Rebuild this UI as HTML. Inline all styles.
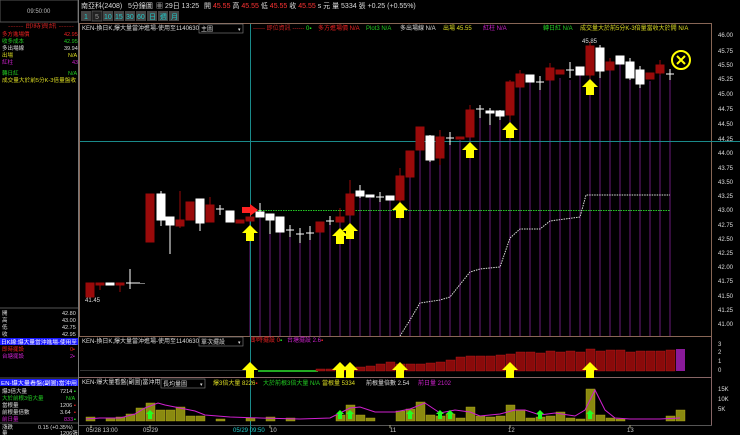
<!DOCTYPE html>
<html><head><meta charset="utf-8">
<style>
html,body{margin:0;padding:0;background:#000;width:740px;height:435px;overflow:hidden}
svg{display:block}
text{font-family:"Liberation Sans","Noto Sans CJK TC",sans-serif}
</style></head><body>
<svg width="740" height="435" viewBox="0 0 740 435" xmlns="http://www.w3.org/2000/svg">
<rect width="740" height="435" fill="#000"/>
<!-- left panel -->
<rect x="0" y="0" width="78" height="22" fill="#000" stroke="#555" stroke-width="1"/>
<text x="27" y="13" font-size="6" fill="#bbb">09:50:00</text>
<line x1="78.5" y1="0" x2="78.5" y2="435" stroke="#777"/>
<text x="8" y="28" font-size="5.5" fill="#c22" textLength="66" lengthAdjust="spacingAndGlyphs">------ 即時資訊 ------</text>
<g font-size="5.5">
<text x="2" y="36" fill="#e22">多方進場價</text><text x="64" y="36" fill="#e22">42.95</text>
<text x="2" y="43" fill="#2c2">收多成本</text><text x="64" y="43" fill="#2c2">42.95</text>
<text x="2" y="50" fill="#ddd">多出場線</text><text x="64" y="50" fill="#ddd">39.94</text>
<text x="2" y="57" fill="#dd2">出場</text><text x="68" y="57" fill="#dd2">N/A</text>
<text x="2" y="64" fill="#c2c">紅柱</text><text x="72" y="64" fill="#c2c">43</text>
<text x="2" y="75" fill="#2c2">轉日紅</text><text x="68" y="75" fill="#2c2">N/A</text>
<text x="2" y="82" fill="#dd2" textLength="74" lengthAdjust="spacingAndGlyphs">成交量大於前5分K-3倍量盤收</text>
</g>
<line x1="0" y1="308" x2="78" y2="308" stroke="#555"/>
<g font-size="5.5">
<text x="2" y="315" fill="#ddd">開</text><text x="62" y="315" fill="#ddd">42.80</text>
<text x="2" y="322" fill="#ddd">高</text><text x="62" y="322" fill="#ddd">43.00</text>
<text x="2" y="329" fill="#ddd">低</text><text x="62" y="329" fill="#ddd">42.75</text>
<text x="2" y="336" fill="#ddd">收</text><text x="62" y="336" fill="#ddd">42.95</text>
</g>
<rect x="0" y="338" width="78" height="7" fill="#1a1aff"/>
<text x="1" y="344" font-size="5.5" fill="#fff" textLength="76" lengthAdjust="spacingAndGlyphs">日K線:爆大量當沖進場-使用至</text>
<g font-size="5.5">
<text x="2" y="351" fill="#e22">即時擺設</text><text x="70" y="351" fill="#e22">0▪</text>
<text x="2" y="358" fill="#c2c">台塘擺設</text><text x="70" y="358" fill="#c2c">2▪</text>
</g>
<line x1="0" y1="378" x2="78" y2="378" stroke="#555"/>
<rect x="0" y="379" width="78" height="7" fill="#1a1aff"/>
<text x="1" y="385" font-size="5.5" fill="#fff" textLength="76" lengthAdjust="spacingAndGlyphs">EN-爆大量看盤(副圖)當沖用</text>
<g font-size="5.5">
<text x="2" y="393" fill="#ddd">爆3倍大量</text><text x="60" y="393" fill="#ddd">7214</text><text x="74" y="393" fill="#2e2">▪</text>
<text x="2" y="400" fill="#2c2">大於前根3倍大量</text><text x="66" y="400" fill="#2c2">N/A</text>
<text x="2" y="407" fill="#ddd">當根量</text><text x="60" y="407" fill="#ddd">1206</text><text x="74" y="407" fill="#e22">▪</text>
<text x="2" y="414" fill="#ddd">前根量倍數</text><text x="60" y="414" fill="#ddd">3.64</text><text x="74" y="414" fill="#e22">▪</text>
<text x="2" y="421" fill="#c2c">前日量</text><text x="64" y="421" fill="#c2c">833</text><text x="74" y="421" fill="#2e2">▪</text>
</g>
<line x1="0" y1="423" x2="78" y2="423" stroke="#555"/>
<text x="2" y="429" font-size="5.5" fill="#ddd">漲跌</text><text x="38" y="429" font-size="5.5" fill="#ddd">0.15 (+0.35%)</text>
<text x="2" y="435" font-size="5.5" fill="#ddd">量</text><text x="60" y="435" font-size="5.5" fill="#ddd">1206張</text>

<!-- header -->
<text x="81" y="8" font-size="7" fill="#ddd">南亞科(2408)</text>
<text x="128" y="8" font-size="7" fill="#ddd">5分鐘圖</text>
<text x="156" y="8" font-size="7" fill="#ddd">▦ 29日 13:25</text>
<text x="204" y="8" font-size="7" fill="#ddd">開 <tspan fill="#f33">45.55</tspan> 高 <tspan fill="#f33">45.55</tspan> 低 <tspan fill="#f33">45.55</tspan> 收 <tspan fill="#f33">45.55</tspan> s 元 量 5334 張 +0.25 (+0.55%)</text>
<g font-size="7" fill="#2cc">
<rect x="81" y="11" width="10" height="10" fill="#444"/><text x="84" y="19">1</text>
<rect x="92" y="11" width="10" height="10" fill="#222" stroke="#777" stroke-width=".5"/><text x="95" y="19" fill="#999">5</text>
<rect x="103" y="11" width="10" height="10" fill="#444"/><text x="104" y="19">10</text>
<rect x="114" y="11" width="10" height="10" fill="#444"/><text x="115" y="19">15</text>
<rect x="125" y="11" width="10" height="10" fill="#444"/><text x="126" y="19">30</text>
<rect x="136" y="11" width="10" height="10" fill="#444"/><text x="137" y="19">60</text>
<rect x="147" y="11" width="10" height="10" fill="#444"/><text x="149" y="19">日</text>
<rect x="158" y="11" width="10" height="10" fill="#444"/><text x="160" y="19">週</text>
<rect x="169" y="11" width="10" height="10" fill="#444"/><text x="171" y="19">月</text>
</g>
<!-- main frame -->
<rect x="79.5" y="23.5" width="632" height="313" fill="none" stroke="#865" stroke-width="1"/>
<line x1="79" y1="377.5" x2="712" y2="377.5" stroke="#866"/>
<line x1="79" y1="425.5" x2="712" y2="425.5" stroke="#555"/>
<line x1="711.5" y1="337" x2="711.5" y2="425" stroke="#866"/>
<text x="82" y="30" font-size="6" fill="#ddd">KEN-換日K,爆大量當沖進場-使用至1140630</text>
<rect x="199" y="24" width="44" height="9" fill="#000" stroke="#888" stroke-width=".6"/><text x="201" y="31" font-size="6" fill="#ddd">主圖</text><text x="238" y="31" font-size="5" fill="#ddd">▾</text>
<g font-size="6">
<text x="253" y="30" fill="#c22">------ 即位資訊 ------ <tspan fill="#2e2">0▪</tspan></text>
<text x="318" y="30" fill="#e22">多方進場價 N/A</text>
<text x="366" y="30" fill="#2c2">Plot3 N/A</text>
<text x="400" y="30" fill="#ddd">多出場線 N/A</text>
<text x="443" y="30" fill="#dd2">出場 45.55</text>
<text x="483" y="30" fill="#c2c">紅柱 N/A</text>
<text x="543" y="30" fill="#2c2">轉日紅 N/A</text>
<text x="580" y="30" fill="#dd2">成交量大於前5分K-3倍量當收大於開 N/A</text>
</g>
<!-- price scale -->
<g font-size="6" fill="#ddd">
<text x="718" y="37">46.00</text><text x="718" y="53">45.75</text><text x="718" y="67">45.50</text><text x="718" y="81">45.25</text><text x="718" y="96">45.00</text><text x="718" y="111">44.75</text><text x="718" y="126">44.50</text><text x="718" y="141">44.25</text><text x="718" y="155">44.00</text><text x="718" y="170">43.75</text><text x="718" y="184">43.50</text><text x="718" y="198">43.25</text><text x="718" y="212">43.00</text><text x="718" y="227">42.75</text><text x="718" y="241">42.50</text><text x="718" y="255">42.25</text><text x="718" y="269">42.00</text><text x="718" y="283">41.75</text><text x="718" y="298">41.50</text><text x="718" y="312">41.25</text><text x="718" y="326">41.00</text>
<text x="718" y="346">3</text><text x="718" y="354">2</text><text x="718" y="363">1</text><text x="718" y="372">0</text>
<text x="718" y="391">15K</text><text x="718" y="401">10K</text><text x="718" y="411">5K</text>
</g>
<!-- purple verticals -->
<g stroke="#6a1a7a" stroke-width="1">
<path d="M250 220V336M260 218V336M270 220V336M280 225V336M290 232V336M300 236V336M310 236V336M320 228V336M330 222V336M340 222V336M350 212V336M360 196V336M370 198V336M380 198V336M390 200V336M400 200V336M410 177V336M420 150V336M430 160V336M440 160V336M450 140V336M460 140V336M470 137V336M480 118V336M490 125V336M500 116V336M510 115V336M520 87V336M530 82V336M540 88V336M550 80V336M560 78V336M570 80V336M580 75V336M590 75V336M600 71V336M610 70V336M620 64V336M630 78V336M640 84V336M650 81V336M660 73V336M670 78V336"/>
</g>
<!-- lines -->
<line x1="80" y1="141.5" x2="740" y2="141.5" stroke="#1a8a8a"/>
<line x1="250.5" y1="24" x2="250.5" y2="435" stroke="#1a8a8a"/>
<line x1="258" y1="210.5" x2="670" y2="210.5" stroke="#2c2" stroke-dasharray="1.5,1"/>
<polyline points="400,336 410,320 420,303 440,300 450,297 470,272 480,269 500,267 510,238 520,229 540,229 550,221 580,217 586,195 670,195" fill="none" stroke="#ddd" stroke-width="1" stroke-dasharray="1.5,1"/>
<!-- candles -->
<g stroke-width="1">
<g fill="#9a0a0a" stroke="#9a0a0a">
<rect x="86" y="283" width="8" height="14"/>
<path d="M100 283V290M120 283V292M180 191V228M210 197V205M340 208V217M350 180V194M400 168V205M420 127V128M440 130V165M470 105V137M510 80V120M520 70V74M550 63V68M590 42V78M610 58V62M660 60V75"/>
<rect x="96" y="283" width="8" height="2"/>
<rect x="116" y="283" width="8" height="2"/>
<rect x="146" y="194" width="8" height="48"/>
<rect x="176" y="220" width="8" height="6"/>
<rect x="186" y="202" width="8" height="18"/>
<rect x="206" y="205" width="8" height="17"/>
<rect x="236" y="220" width="8" height="3"/>
<rect x="246" y="217" width="8" height="4"/>
<rect x="316" y="222" width="8" height="10"/>
<rect x="336" y="217" width="8" height="5"/>
<rect x="346" y="194" width="8" height="21"/>
<rect x="396" y="176" width="8" height="24"/>
<rect x="406" y="151" width="8" height="26"/>
<rect x="416" y="127" width="8" height="23"/>
<rect x="436" y="137" width="8" height="21"/>
<rect x="456" y="137" width="8" height="2"/>
<rect x="466" y="110" width="8" height="27"/>
<rect x="506" y="82" width="8" height="33"/>
<rect x="516" y="74" width="8" height="13"/>
<rect x="546" y="68" width="8" height="12"/>
<rect x="556" y="70" width="8" height="4"/>
<rect x="586" y="46" width="8" height="29"/>
<rect x="606" y="62" width="8" height="8"/>
<rect x="646" y="73" width="8" height="6"/>
<rect x="656" y="65" width="8" height="8"/>
</g>
<g fill="#fff" stroke="#fff">
<path d="M130 269V289M126 283H140M161 191V226M170 225V254M200 223V231M220 205V215M216 209H224M260 203V212M270 220V234M290 225V237M286 230H294M300 228V243M296 234H304M310 226V240M306 233H314M330 216V225M326 221H334M360 185V198M380 192V202M376 197H384M430 135V162M450 132V145M446 138H454M480 105V118M476 109H484M490 108V125M500 110V120M540 76V90M536 82H544M570 62V78M566 70H574M600 45V78M630 58V80M640 66V88M670 69V80M666 74H674"/>
<rect x="106" y="283" width="8" height="2"/>
<rect x="157" y="194" width="8" height="26"/>
<rect x="166" y="217" width="8" height="8"/>
<rect x="196" y="199" width="8" height="24"/>
<rect x="226" y="211" width="8" height="11"/>
<rect x="256" y="212" width="8" height="5"/>
<rect x="266" y="214" width="8" height="6"/>
<rect x="276" y="217" width="8" height="15"/>
<rect x="356" y="191" width="8" height="5"/>
<rect x="366" y="195" width="8" height="2"/>
<rect x="386" y="196" width="8" height="4"/>
<rect x="426" y="136" width="8" height="24"/>
<rect x="486" y="111" width="8" height="2"/>
<rect x="496" y="111" width="8" height="5"/>
<rect x="526" y="75" width="8" height="7"/>
<rect x="576" y="67" width="8" height="8"/>
<rect x="596" y="48" width="8" height="23"/>
<rect x="616" y="56" width="8" height="8"/>
<rect x="626" y="62" width="8" height="16"/>
<rect x="636" y="70" width="8" height="14"/>
</g>
<line x1="140" y1="283.5" x2="145" y2="283.5" stroke="#777"/>
</g>
<text x="85" y="302" font-size="6" fill="#ddd">41.45</text>
<text x="582" y="43" font-size="6" fill="#ddd">45.85</text>
<!-- red arrow -->
<path d="M242 207h8v-3l8 6-8 6v-3h-8z" fill="#f22"/>
<!-- subpanel 1 -->
<text x="82" y="343" font-size="6" fill="#ddd">KEN-換日K,爆大量當沖進場-使用至1140630</text>
<rect x="199" y="337" width="44" height="9" fill="#000" stroke="#888" stroke-width=".6"/><text x="201" y="344" font-size="6" fill="#ddd">單次擺設</text><text x="238" y="344" font-size="5" fill="#ddd">▾</text>
<text x="251" y="342" font-size="6" fill="#e22">即時擺設 0<tspan fill="#2e2">▪</tspan></text>
<text x="287" y="342" font-size="6" fill="#c2c">台塘擺設 2.6<tspan fill="#e22">▪</tspan></text>
<line x1="80" y1="370.5" x2="250" y2="370.5" stroke="#333"/>
<g fill="#2a2"><rect x="258" y="370" width="60" height="2"/></g>
<g fill="#8a0a0a" stroke="#b22" stroke-width=".4">
<rect x="316" y="369" width="9" height="2"/><rect x="326" y="369" width="9" height="2"/><rect x="336" y="368" width="9" height="3"/><rect x="346" y="368" width="9" height="3"/><rect x="356" y="367" width="9" height="4"/><rect x="366" y="366" width="9" height="5"/><rect x="376" y="364" width="9" height="7"/><rect x="386" y="362" width="9" height="9"/><rect x="396" y="364" width="9" height="7"/><rect x="406" y="364" width="9" height="7"/><rect x="416" y="364" width="9" height="7"/><rect x="426" y="363" width="9" height="8"/><rect x="436" y="362" width="9" height="9"/><rect x="446" y="360" width="9" height="11"/><rect x="456" y="357" width="9" height="14"/><rect x="466" y="356" width="9" height="15"/><rect x="476" y="356" width="9" height="15"/><rect x="486" y="356" width="9" height="15"/><rect x="496" y="355" width="9" height="16"/><rect x="506" y="354" width="9" height="17"/><rect x="516" y="352" width="9" height="19"/><rect x="526" y="352" width="9" height="19"/><rect x="536" y="353" width="9" height="18"/><rect x="546" y="351" width="9" height="20"/><rect x="556" y="352" width="9" height="19"/><rect x="566" y="351" width="9" height="20"/><rect x="576" y="352" width="9" height="19"/><rect x="586" y="349" width="9" height="22"/><rect x="596" y="351" width="9" height="20"/><rect x="606" y="350" width="9" height="21"/><rect x="616" y="350" width="9" height="21"/><rect x="626" y="352" width="9" height="19"/><rect x="636" y="351" width="9" height="20"/><rect x="646" y="351" width="9" height="20"/><rect x="656" y="351" width="9" height="20"/><rect x="666" y="350" width="9" height="21"/>
</g>
<rect x="676" y="349" width="9" height="22" fill="#8a1a9a"/>
<!-- yellow arrows -->
<g fill="#ff0">
<path id="ya" d="M250 225l-8 8h4v8h8v-8h4z"/>
<use href="#ya" x="90" y="3"/><use href="#ya" x="100" y="-2"/><use href="#ya" x="150" y="-23"/><use href="#ya" x="220" y="-83"/><use href="#ya" x="260" y="-103"/><use href="#ya" x="340" y="-146"/>
<use href="#ya" y="137"/><use href="#ya" x="90" y="137"/><use href="#ya" x="100" y="137"/><use href="#ya" x="150" y="137"/><use href="#ya" x="260" y="137"/><use href="#ya" x="340" y="137"/>
</g>
<circle cx="681" cy="60" r="9" fill="none" stroke="#ff0" stroke-width="2"/>
<path d="M677 56l8 8M685 56l-8 8" stroke="#ff0" stroke-width="2"/>
<!-- subpanel 2 -->
<text x="82" y="384" font-size="6" fill="#ddd">KEN-爆大量看盤(副圖)當沖用</text>
<rect x="161" y="379" width="44" height="9" fill="#000" stroke="#888" stroke-width=".6"/><text x="163" y="386" font-size="6" fill="#ddd">長均量圖</text><text x="200" y="386" font-size="5" fill="#ddd">▾</text>
<g font-size="6">
<text x="213" y="385" fill="#dd2">爆3倍大量 8226<tspan fill="#e22">▪</tspan></text>
<text x="263" y="385" fill="#2c2">大於前根3倍大量 N/A</text>
<text x="322" y="385" fill="#dd2">當根量 5334</text>
<text x="366" y="385" fill="#ddd">前根量倍數 2.54</text>
<text x="418" y="385" fill="#c2c">前日量 2102</text>
</g>
<g fill="#8a8a10" stroke="#bbb020" stroke-width=".4">
<rect x="86" y="417" width="9" height="4"/><rect x="106" y="418" width="9" height="3"/><rect x="116" y="417" width="9" height="4"/><rect x="126" y="414" width="9" height="7"/><rect x="136" y="408" width="9" height="13"/><rect x="146" y="403" width="9" height="18"/><rect x="156" y="410" width="9" height="11"/><rect x="166" y="410" width="9" height="11"/><rect x="176" y="407" width="9" height="14"/><rect x="186" y="416" width="9" height="5"/><rect x="196" y="416" width="9" height="5"/><rect x="216" y="419" width="9" height="2"/><rect x="246" y="418" width="9" height="3"/><rect x="266" y="417" width="9" height="4"/><rect x="286" y="418" width="9" height="3"/><rect x="336" y="415" width="9" height="6"/><rect x="346" y="405" width="9" height="16"/><rect x="356" y="415" width="9" height="6"/><rect x="366" y="418" width="9" height="3"/><rect x="396" y="411" width="9" height="10"/><rect x="406" y="409" width="9" height="12"/><rect x="416" y="402" width="9" height="19"/><rect x="426" y="415" width="9" height="6"/><rect x="436" y="416" width="9" height="5"/><rect x="446" y="414" width="9" height="7"/><rect x="456" y="418" width="9" height="3"/><rect x="466" y="407" width="9" height="14"/><rect x="476" y="416" width="9" height="5"/><rect x="486" y="417" width="9" height="4"/><rect x="496" y="416" width="9" height="5"/><rect x="506" y="405" width="9" height="16"/><rect x="516" y="410" width="9" height="11"/><rect x="526" y="418" width="9" height="3"/><rect x="536" y="417" width="9" height="4"/><rect x="546" y="416" width="9" height="5"/><rect x="556" y="412" width="9" height="9"/><rect x="566" y="418" width="9" height="3"/><rect x="576" y="419" width="9" height="2"/><rect x="586" y="389" width="9" height="32"/><rect x="596" y="415" width="9" height="6"/><rect x="606" y="418" width="9" height="3"/><rect x="616" y="419" width="9" height="2"/><rect x="666" y="416" width="9" height="5"/><rect x="676" y="410" width="9" height="11"/>
</g>
<polyline points="86,419 100,418 120,418 135,414 145,408 158,403 165,405 180,408 195,411 205,415 230,417 260,418 300,419 330,418 350,408 360,407 375,412 395,412 410,409 425,403 440,413 455,410 470,412 480,416 500,414 515,410 525,410 540,415 555,413 575,416 585,410 595,390 605,410 615,418 630,419 660,419 680,418" fill="none" stroke="#d020d0" stroke-width="1"/>
<g fill="#2f2">
<path id="ga" d="M150 410l-4 4h2v5h4v-5h2z"/>
<use href="#ga" x="190"/><use href="#ga" x="200"/><use href="#ga" x="260"/><use href="#ga" x="290"/><use href="#ga" x="300"/><use href="#ga" x="390"/><use href="#ga" x="440"/>
</g>
<!-- date axis -->
<g font-size="6" fill="#ccc">
<text x="86" y="432">05/28 13:00</text><text x="143" y="432">05/29</text><text x="390" y="432">11</text><text x="508" y="432">12</text><text x="627" y="432">13</text>
<text x="233" y="432" fill="#2cc">05/29 09:50</text><text x="270" y="432">10</text>
</g>
<g stroke="#aa8" stroke-width="1"><path d="M91 425v3M150 425v3M270 425v3M390 425v3M510 425v3M630 425v3"/></g>
</svg>
</body></html>
